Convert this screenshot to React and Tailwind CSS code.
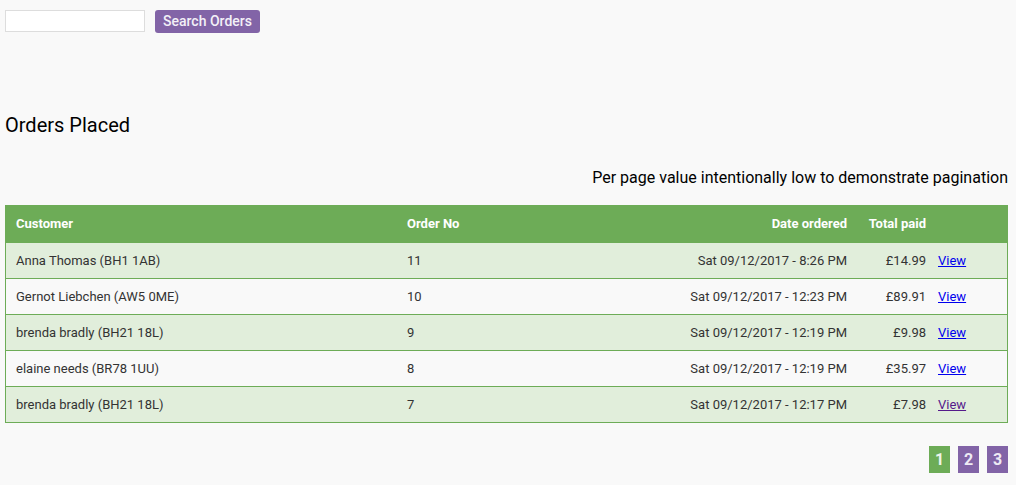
import React from "react";

const rows = [
  { c: "Anna Thomas (BH1 1AB)", n: "11", d: "Sat 09/12/2017 - 8:26 PM", t: "£14.99", alt: true },
  { c: "Gernot Liebchen (AW5 0ME)", n: "10", d: "Sat 09/12/2017 - 12:23 PM", t: "£89.91", alt: false },
  { c: "brenda bradly (BH21 18L)", n: "9", d: "Sat 09/12/2017 - 12:19 PM", t: "£9.98", alt: true },
  { c: "elaine needs (BR78 1UU)", n: "8", d: "Sat 09/12/2017 - 12:19 PM", t: "£35.97", alt: false },
  { c: "brenda bradly (BH21 18L)", n: "7", d: "Sat 09/12/2017 - 12:17 PM", t: "£7.98", alt: true, visited: true },
];

export default function App() {
  return (
    <div className="min-h-[485px] w-[1016px] bg-[#f9f9f9] font-['Roboto',sans-serif] text-black">
      <div className="flex items-start pl-[5px] pt-[10px]">
        <input className="h-[22px] w-[140px] border border-[#dddddd] bg-white outline-none" />
        <button className="ml-[10px] h-[23px] w-[105px] rounded-[3px] bg-[#8264a7] text-[14px] font-medium text-[#f3f0f7] font-['Roboto',sans-serif]">
          Search Orders
        </button>
      </div>
      <h1 className="ml-[5px] mt-[80px] text-[20px] leading-[24px]">Orders Placed</h1>
      <p className="mr-[8px] mt-[31px] text-right text-[16px] leading-[20px]">
        Per page value intentionally low to demonstrate pagination
      </p>
      <div className="ml-[5px] mt-[17px] w-[1003px] border border-[#6dac57] text-[13px] text-[#333333]">
        <div className="flex h-[36px] items-center bg-[#6dac57] font-bold text-white">
          <div className="w-[391px] pl-[10px]">Customer</div>
          <div className="w-[203px] pl-[10px]">Order No</div>
          <div className="w-[257px] pr-[10px] text-right">Date ordered</div>
          <div className="w-[69px] text-right">Total paid</div>
          <div className="flex-1" />
        </div>
        {rows.map((r, i) => (
          <div
            key={i}
            className={`flex h-[36px] items-center border-t border-[#6dac57] ${r.alt ? "bg-[#e1eedb]" : "bg-[#f9f9f9]"}`}
          >
            <div className="w-[391px] pl-[10px]">{r.c}</div>
            <div className="w-[203px] pl-[10px]">{r.n}</div>
            <div className="w-[257px] pr-[10px] text-right">{r.d}</div>
            <div className="w-[69px] text-right">{r.t}</div>
            <div className="flex-1 pl-[12px]">
              <a href="#" className={`underline ${r.visited ? "text-[#551a8b]" : "text-[#0000ee]"}`}>View</a>
            </div>
          </div>
        ))}
      </div>
      <div className="mr-[8px] mt-[23px] flex justify-end gap-[8px]">
        <div className="flex h-[27px] w-[21px] items-center justify-center bg-[#6dac57] text-[16px] font-bold text-[#eef5ea]">1</div>
        <div className="flex h-[27px] w-[21px] items-center justify-center bg-[#8264a7] text-[16px] font-bold text-[#eeeaf4]">2</div>
        <div className="flex h-[27px] w-[21px] items-center justify-center bg-[#8264a7] text-[16px] font-bold text-[#eeeaf4]">3</div>
      </div>
    </div>
  );
}
